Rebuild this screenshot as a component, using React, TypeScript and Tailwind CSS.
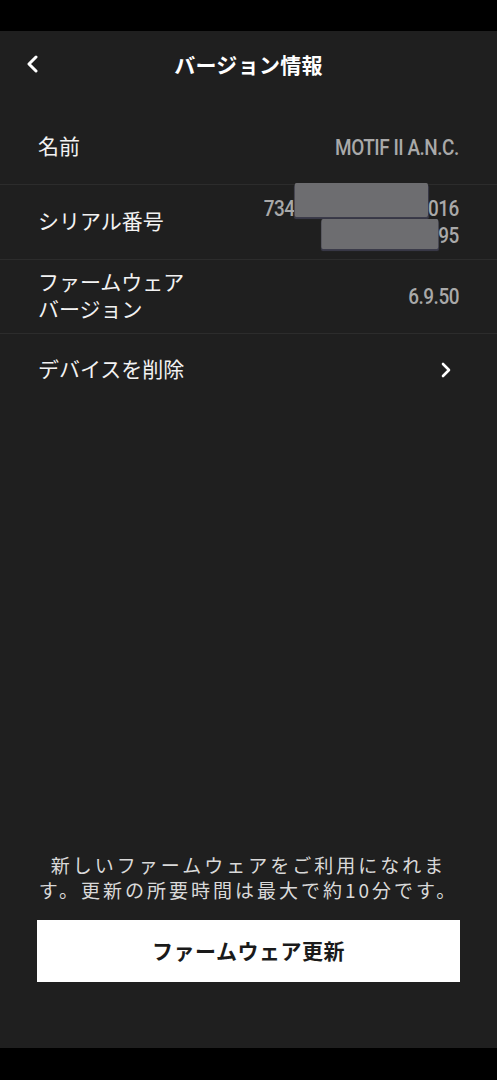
import React from "react";

const jp = `font-['Noto_Sans_CJK_JP','Noto_Sans',sans-serif]`;
const num = `font-['Roboto','Liberation_Sans',sans-serif]`;

function BackIcon() {
	return (
		<svg width="16" height="18" viewBox="0 0 16 18" fill="none">
			<path d="M11 2 L4 9 L11 16" stroke="#ffffff" strokeWidth="3" strokeLinecap="round" strokeLinejoin="round" />
		</svg>
	);
}

function NextIcon() {
	return (
		<svg width="12" height="18" viewBox="0 0 12 18" fill="none">
			<path d="M3 3 L9 9 L3 15" stroke="#ffffff" strokeWidth="2.6" strokeLinecap="round" strokeLinejoin="round" />
		</svg>
	);
}

function Redacted({ w, h }: { w: number; h: number }) {
	return (
		<span
			className="inline-block rounded-[2px] bg-[#6d6d70] shadow-[0_2px_1px_#3b3b4a]"
			style={{ width: w, height: h }}
		/>
	);
}

export default function App() {
	const rowStyle = {
		row: `flex items-center justify-between px-[38px] border-b border-[#2c2c2c]`,
		label: `${jp} -mt-[4px] text-[21px] leading-[27px] text-[#f2f2f2]`,
		value: `${num} origin-right scale-x-[0.86] text-[22px] leading-[27px] font-medium tracking-tight text-[#a9a9a9]`,
	};

	return (
		<div className="w-[497px] h-[1080px] flex flex-col bg-black">
			<div className="h-[31px] bg-black" />
			<div className="flex-1 flex flex-col bg-[#1f1f1f]">
				<div className="h-[67px] grid grid-cols-[70px_1fr_70px] items-center">
					<div className="pl-[25px] -mt-[2px] flex items-center">
						<BackIcon />
					</div>
					<h1 className={`${jp} text-center text-[21px] font-bold tracking-[0.3px] text-white`}>
						バージョン情報
					</h1>
					<div />
				</div>

				<div className="mt-[12px]">
					<div className={`${rowStyle.row} h-[75px]`}>
						<span className={rowStyle.label}>名前</span>
						<span className={rowStyle.value}>MOTIF II A.N.C.</span>
					</div>
					<div className={`${rowStyle.row} h-[75px]`}>
						<span className={rowStyle.label}>シリアル番号</span>
						<div className={`${rowStyle.value} flex flex-col items-end`}>
							<div className="flex items-center h-[27px]">
								<span>734</span>
								<span className="-mt-[12px]">
									<Redacted w={155} h={34} />
								</span>
								<span>016</span>
							</div>
							<div className="flex items-center h-[27px]">
								<span className="mt-[3px]">
									<Redacted w={136} h={30} />
								</span>
								<span>95</span>
							</div>
						</div>
					</div>
					<div className={`${rowStyle.row} h-[74px]`}>
						<span className={rowStyle.label}>
							ファームウェア
							<br />
							バージョン
						</span>
						<span className={rowStyle.value}>6.9.50</span>
					</div>
					<div className="flex items-center justify-between px-[38px] h-[72px]">
						<span className={rowStyle.label}>デバイスを削除</span>
						<span className="mr-[7px] flex items-center">
							<NextIcon />
						</span>
					</div>
				</div>

				<div className="flex-1" />

				<div className="px-[37px] pb-[66px] flex flex-col">
					<p className={`${jp} text-center text-[19px] leading-[25px] tracking-[3px] text-[#d9d9d9] mb-[18px]`}>
						新しいファームウェアをご利用になれま
						<br />
						す。更新の所要時間は最大で約10分です。
					</p>
					<button className={`${jp} h-[62px] w-full bg-white text-[21px] font-bold tracking-[0.5px] text-[#1a1a1a]`}>
						ファームウェア更新
					</button>
				</div>
			</div>
			<div className="h-[32px] bg-black" />
		</div>
	);
}
